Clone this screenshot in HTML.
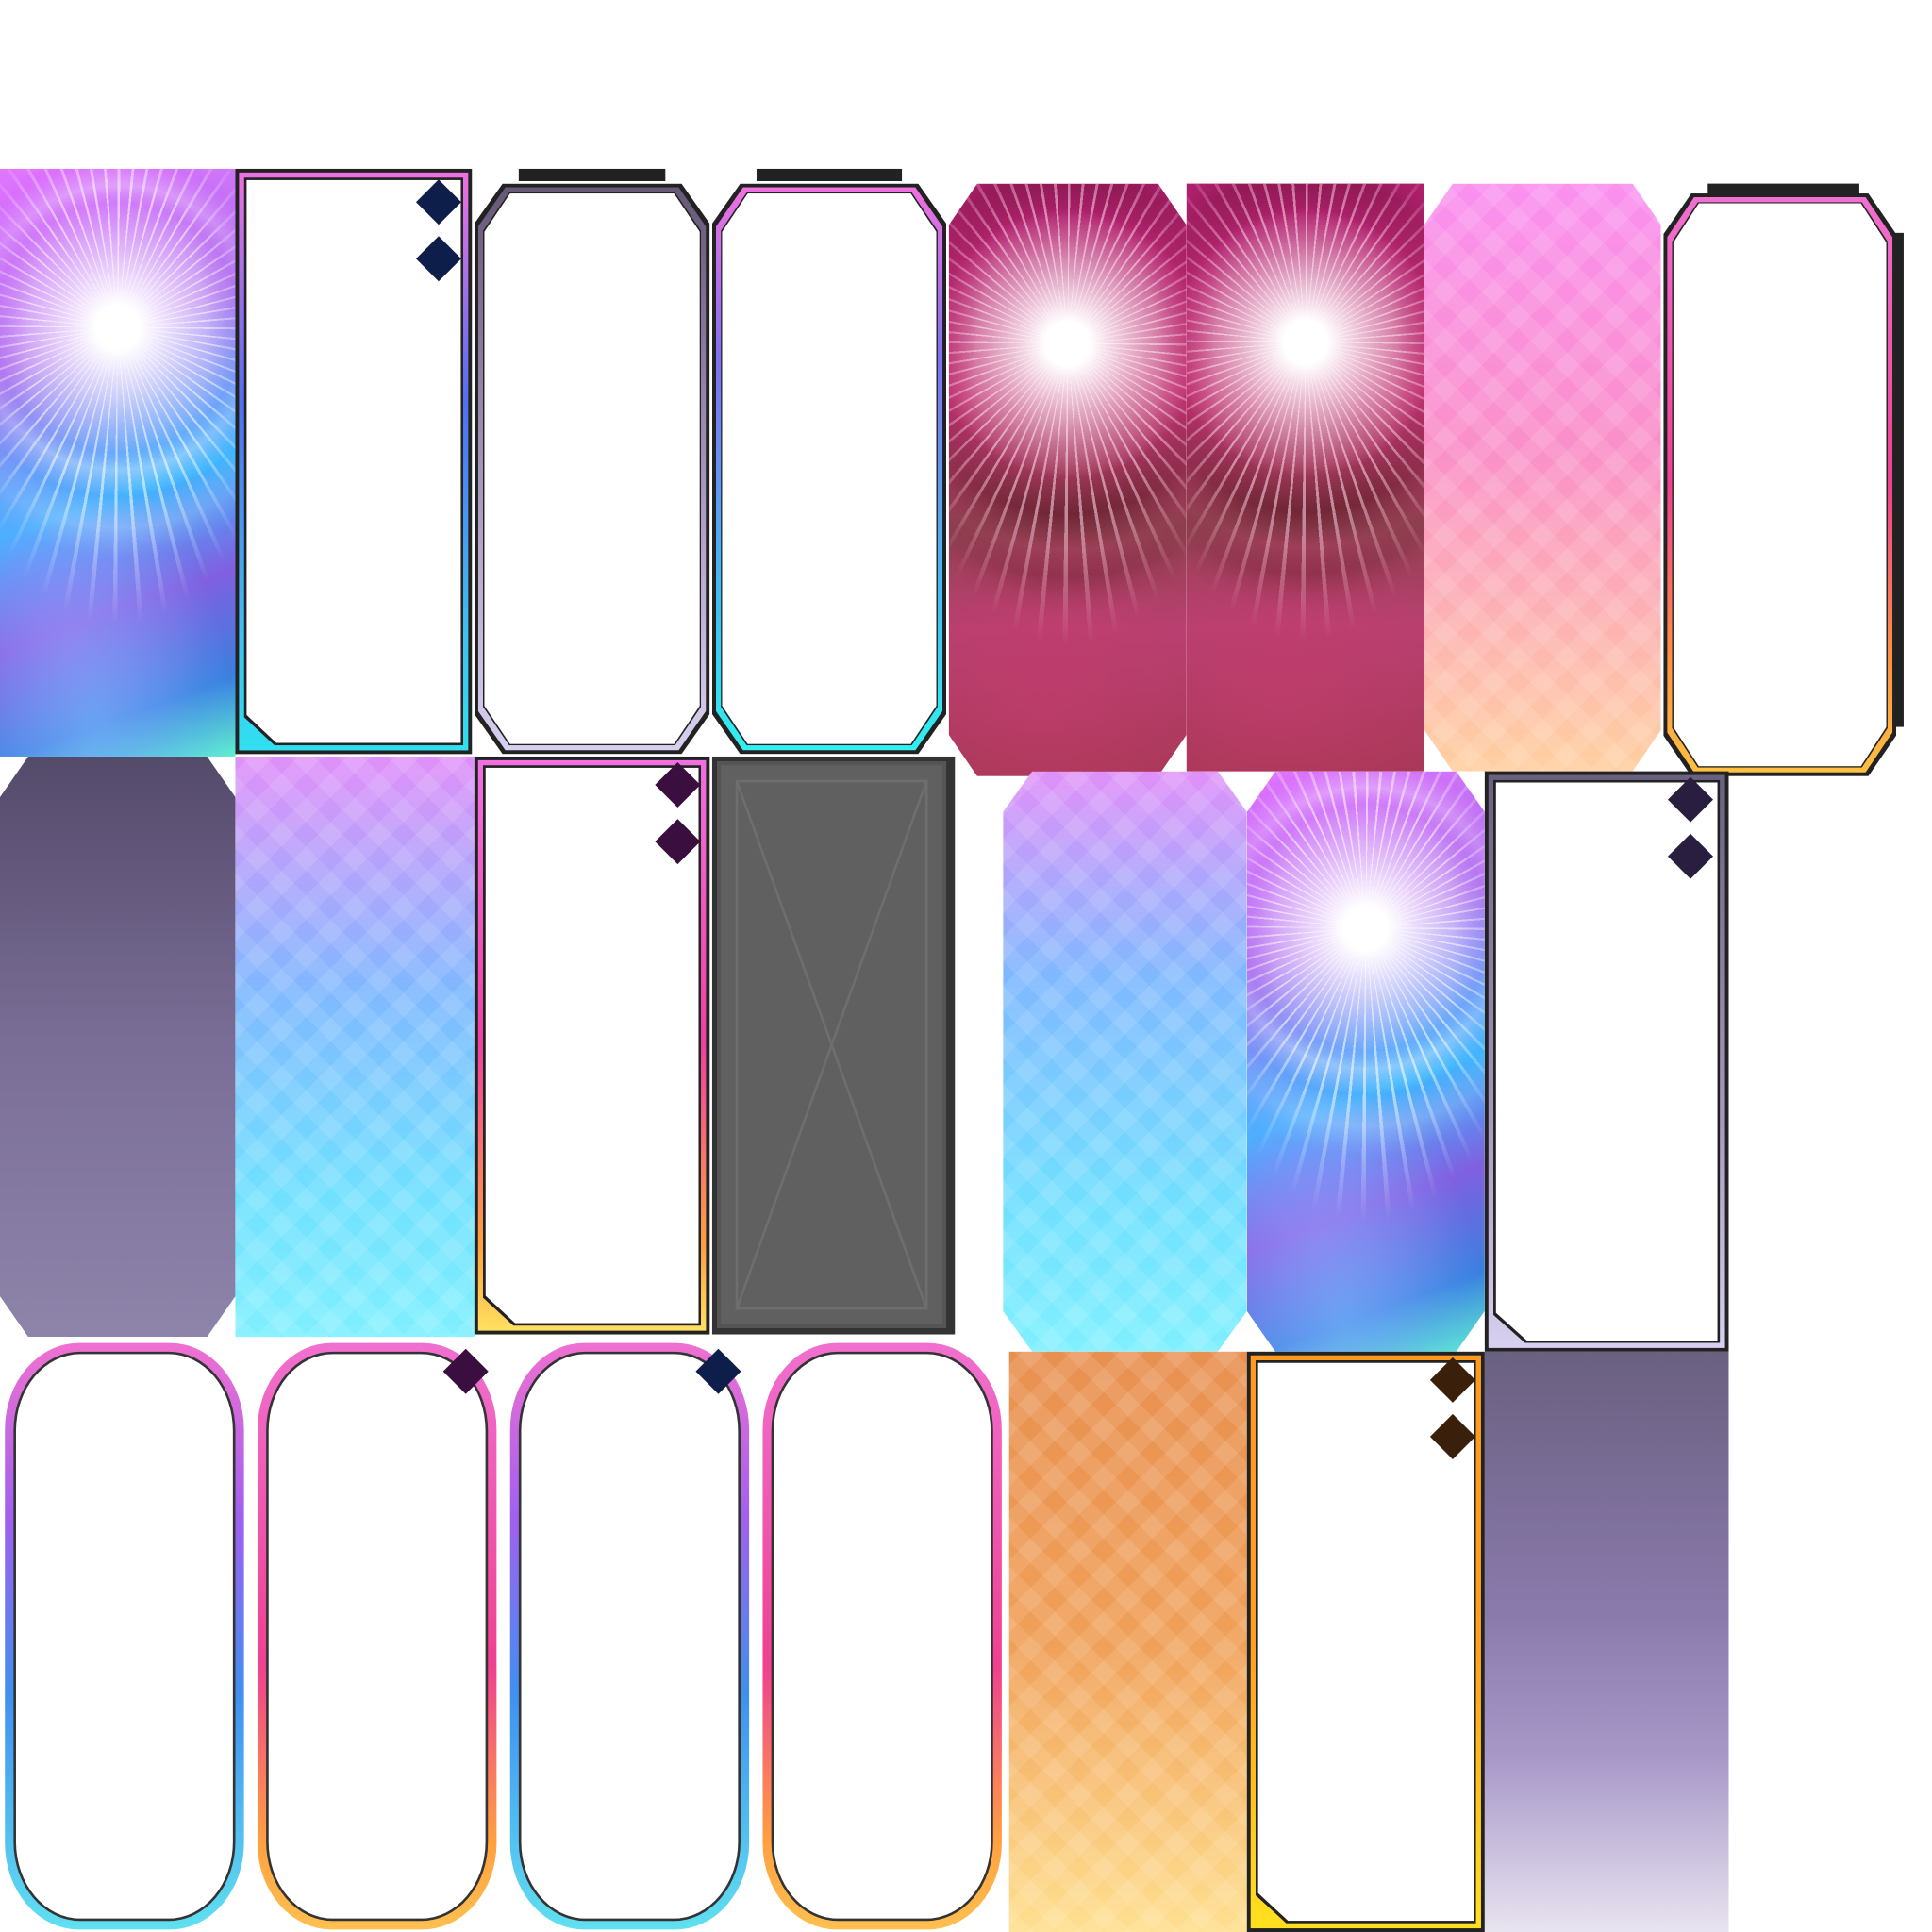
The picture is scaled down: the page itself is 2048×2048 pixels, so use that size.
<!DOCTYPE html>
<html><head><meta charset="utf-8"><style>
html,body{margin:0;padding:0;background:#fff;width:2048px;height:2048px;overflow:hidden}
#w{position:absolute;left:0;top:0;width:1568px;height:1568px;transform:scale(1.30612);transform-origin:0 0}
.t{position:absolute}
.oct{clip-path:polygon(12% 0,88% 0,100% 7%,100% 93%,88% 100%,12% 100%,0 93%,0 7%)}
.oct2{clip-path:polygon(0 0,100% 0,100% 100%,14% 100%,0 95%)}
.burst{background:
 radial-gradient(ellipse 60% 40% at 40% 95%,rgba(120,200,255,.5),rgba(120,200,255,0)),
 radial-gradient(ellipse 60% 30% at 30% 80%,rgba(200,120,255,.4),rgba(200,120,255,0)),
 linear-gradient(160deg,#e070ff 0%,#b070f0 30%,#3fb6ff 55%,#8060e0 72%,#3a80e0 88%,#60f0d0 100%)}
.burstr{background:
 radial-gradient(ellipse 70% 30% at 40% 85%,rgba(200,60,110,.5),rgba(200,60,110,0)),
 linear-gradient(180deg,#b02070 0%,#c03070 35%,#904050 58%,#b84070 75%,#a83858 100%)}
.burst::before,.burstr::before{content:"";position:absolute;inset:0;
 background:
 radial-gradient(circle at 50% 27%,#fff 0,#fff 5%,rgba(255,255,255,.8) 10%,rgba(255,255,255,0) 30%),
 repeating-conic-gradient(from 0deg at 50% 27%,rgba(255,255,255,.55) 0 1deg,rgba(255,255,255,0) 1deg 5deg),
 radial-gradient(circle at 50% 27%,rgba(255,255,255,0) 28%,rgba(255,255,255,.35) 32%,rgba(255,255,255,0) 38%,rgba(255,255,255,.3) 45%,rgba(255,255,255,0) 52%);
 -webkit-mask-image:radial-gradient(ellipse 70% 48% at 50% 30%,#000 55%,transparent 100%);
 mask-image:radial-gradient(ellipse 70% 48% at 50% 30%,#000 55%,transparent 100%)}
.burstr::before{background:
 radial-gradient(circle at 50% 27%,#fff 0,#fff 5%,rgba(255,255,255,.8) 10%,rgba(255,255,255,0) 30%),
 repeating-conic-gradient(from 0deg at 50% 27%,rgba(255,220,235,.55) 0 1deg,rgba(255,255,255,0) 1deg 5deg),
 radial-gradient(circle at 50% 27%,rgba(0,0,0,0) 28%,rgba(70,10,20,.45) 38%,rgba(0,0,0,0) 46%,rgba(70,10,20,.45) 52%,rgba(0,0,0,0) 60%)}
.fr{position:absolute}
.fr .o{position:absolute;inset:0;background:#222}
.fr .g{position:absolute;inset:3px}
.fr .i{position:absolute;inset:8px;background:#fff}
.fr .k{position:absolute;inset:7px;background:#222}
.dm{position:absolute;width:26px;height:26px;transform:rotate(45deg)}
</style></head><body><div id="w">

<!-- row 1 -->
<div class="t burst" style="left:0;top:137px;width:191px;height:477px"></div>

<div class="fr" style="left:191px;top:137px;width:192px;height:475px">
 <div class="o"></div><div class="g" style="background:linear-gradient(180deg,#f070e0,#5070f0 40%,#40c0f0 80%,#30e0f0)"></div>
 <div class="k oct2"></div><div class="i oct2" style="inset:9px"></div>
 <div class="dm" style="left:152px;top:14px;background:#0e1e4a"></div><div class="dm" style="left:152px;top:60px;background:#0e1e4a"></div>
</div>

<div class="fr" style="left:385px;top:137px;width:191px;height:475px">
 <div class="o" style="top:0;left:36px;right:36px;height:10px"></div>
 <div class="o oct" style="inset:12px 0 0 0"></div>
 <div class="g oct" style="inset:15px 3px 3px 3px;background:linear-gradient(180deg,#665877,#b0a0c8 60%,#d8d0f0)"></div>
 <div class="o oct" style="inset:19px 7px 7px 7px"></div>
 <div class="i oct" style="inset:20px 8px 8px 8px"></div>
</div>

<div class="fr" style="left:578px;top:137px;width:190px;height:475px">
 <div class="o" style="top:0;left:36px;right:36px;height:10px"></div>
 <div class="o oct" style="inset:12px 0 0 0"></div>
 <div class="g oct" style="inset:15px 3px 3px 3px;background:linear-gradient(180deg,#f070e0,#8070f0 30%,#40c0f0 75%,#30f0f0)"></div>
 <div class="o oct" style="inset:19px 7px 7px 7px"></div>
 <div class="i oct" style="inset:20px 8px 8px 8px"></div>
</div>

<div class="t burstr oct" style="left:770px;top:149px;width:193px;height:481px"></div>
<div class="t burstr" style="left:963px;top:149px;width:193px;height:477px"></div>
<div class="t oct" style="left:1156px;top:149px;width:192px;height:477px;background:repeating-linear-gradient(45deg,rgba(255,255,255,.1) 0 14px,rgba(255,255,255,0) 14px 28px),repeating-linear-gradient(-45deg,rgba(255,255,255,.1) 0 14px,rgba(255,255,255,0) 14px 28px),linear-gradient(180deg,#fa90f0,#fa90c8 45%,#ffd0a0)"></div>

<div class="fr" style="left:1350px;top:149px;width:195px;height:481px">
 <div class="o" style="top:0;left:36px;right:36px;height:10px"></div>
 <div class="o" style="top:40px;left:auto;right:0;width:10px;bottom:40px"></div>
 <div class="o oct" style="inset:8px 6px 0 0"></div>
 <div class="g oct" style="inset:11px 9px 3px 3px;background:linear-gradient(180deg,#f070d0,#f04090 50%,#ff9040 80%,#ffc040)"></div>
 <div class="o oct" style="inset:15px 13px 7px 7px"></div>
 <div class="i oct" style="inset:16px 14px 8px 8px"></div>
</div>

<!-- row 2 -->
<div class="t oct" style="left:0;top:614px;width:191px;height:471px;background:linear-gradient(180deg,#544a6a,#7a6e96 50%,#8e84aa)"></div>
<div class="t" style="left:191px;top:614px;width:194px;height:471px;background:repeating-linear-gradient(45deg,rgba(255,255,255,.1) 0 14px,rgba(255,255,255,0) 14px 28px),repeating-linear-gradient(-45deg,rgba(255,255,255,.1) 0 14px,rgba(255,255,255,0) 14px 28px),linear-gradient(180deg,#e090f8,#80b8ff 40%,#70e0ff 75%,#80f0ff)"></div>

<div class="fr" style="left:385px;top:614px;width:191px;height:469px">
 <div class="o"></div><div class="g" style="background:linear-gradient(180deg,#f070e0,#f040a0 50%,#ffa040 85%,#ffe060)"></div>
 <div class="k oct2"></div><div class="i oct2" style="inset:9px"></div>
 <div class="dm" style="left:152px;top:10px;background:#3a0e3e"></div><div class="dm" style="left:152px;top:56px;background:#3a0e3e"></div>
</div>

<div class="t" style="left:578px;top:614px;width:197px;height:469px;background:#333"></div>
<div class="t" style="left:582px;top:618px;width:186px;height:460px;background:#606060;box-shadow:inset 0 0 0 3px #555">
 <svg width="186" height="460" style="position:absolute;left:0;top:0"><path d="M16 16 L170 444 M170 16 L16 444 M16 16H170V444H16Z" stroke="#6e6e6e" stroke-width="2" fill="none"/></svg>
</div>

<div class="t oct" style="left:814px;top:626px;width:198px;height:471px;background:repeating-linear-gradient(45deg,rgba(255,255,255,.1) 0 14px,rgba(255,255,255,0) 14px 28px),repeating-linear-gradient(-45deg,rgba(255,255,255,.1) 0 14px,rgba(255,255,255,0) 14px 28px),linear-gradient(180deg,#e090f8,#80b8ff 35%,#70e0ff 75%,#80f0ff)"></div>
<div class="t burst oct" style="left:1012px;top:626px;width:193px;height:471px"></div>

<div class="fr" style="left:1205px;top:626px;width:198px;height:471px">
 <div class="o"></div><div class="g" style="background:linear-gradient(180deg,#6a6080,#a898c0 60%,#d8d0f0)"></div>
 <div class="k oct2"></div><div class="i oct2" style="inset:9px"></div>
 <div class="dm" style="left:154px;top:10px;background:#2a1e40"></div><div class="dm" style="left:154px;top:56px;background:#2a1e40"></div>
</div>

<!-- row 3 ornate -->
<div class="fr" style="left:4px;top:1090px;width:194px;height:476px">
 <div class="g" style="inset:0;border-radius:60px/70px;background:linear-gradient(180deg,#f070d0,#a060f0 30%,#4090f0 60%,#60e0f0)"></div>
 <div class="i" style="inset:9px;border-radius:52px/62px;box-shadow:0 0 0 2px #333"></div>
</div>
<div class="fr" style="left:209px;top:1090px;width:194px;height:476px">
 <div class="g" style="inset:0;border-radius:60px/70px;background:linear-gradient(180deg,#f070d0,#f04090 55%,#ffa040 85%,#ffc050)"></div>
 <div class="i" style="inset:9px;border-radius:52px/62px;box-shadow:0 0 0 2px #333"></div>
 <div class="dm" style="left:156px;top:10px;background:#3a0e3e"></div>
</div>
<div class="fr" style="left:414px;top:1090px;width:194px;height:476px">
 <div class="g" style="inset:0;border-radius:60px/70px;background:linear-gradient(180deg,#f070d0,#a060f0 30%,#4090f0 60%,#60e0f0)"></div>
 <div class="i" style="inset:9px;border-radius:52px/62px;box-shadow:0 0 0 2px #333"></div>
 <div class="dm" style="left:156px;top:10px;background:#0e1e4a"></div>
</div>
<div class="fr" style="left:619px;top:1090px;width:194px;height:476px">
 <div class="g" style="inset:0;border-radius:60px/70px;background:linear-gradient(180deg,#f070d0,#f04090 55%,#ffa040 85%,#ffc050)"></div>
 <div class="i" style="inset:9px;border-radius:52px/62px;box-shadow:0 0 0 2px #333"></div>
</div>

<div class="t" style="left:819px;top:1097px;width:193px;height:471px;background:repeating-linear-gradient(45deg,rgba(255,255,255,.1) 0 14px,rgba(255,255,255,0) 14px 28px),repeating-linear-gradient(-45deg,rgba(255,255,255,.1) 0 14px,rgba(255,255,255,0) 14px 28px),linear-gradient(180deg,#e89050,#f0a058 50%,#ffe090)"></div>

<div class="fr" style="left:1012px;top:1097px;width:193px;height:471px">
 <div class="o"></div><div class="g" style="background:linear-gradient(180deg,#ff9a20,#ffa020 50%,#ffe020)"></div>
 <div class="k oct2"></div><div class="i oct2" style="inset:9px"></div>
 <div class="dm" style="left:154px;top:10px;background:#3a200a"></div><div class="dm" style="left:154px;top:56px;background:#3a200a"></div>
</div>

<div class="t" style="left:1205px;top:1097px;width:198px;height:471px;background:linear-gradient(180deg,#6a6080,#8a7aac 45%,#a898c8 70%,#e8e4f0)"></div>

</div></body></html>
